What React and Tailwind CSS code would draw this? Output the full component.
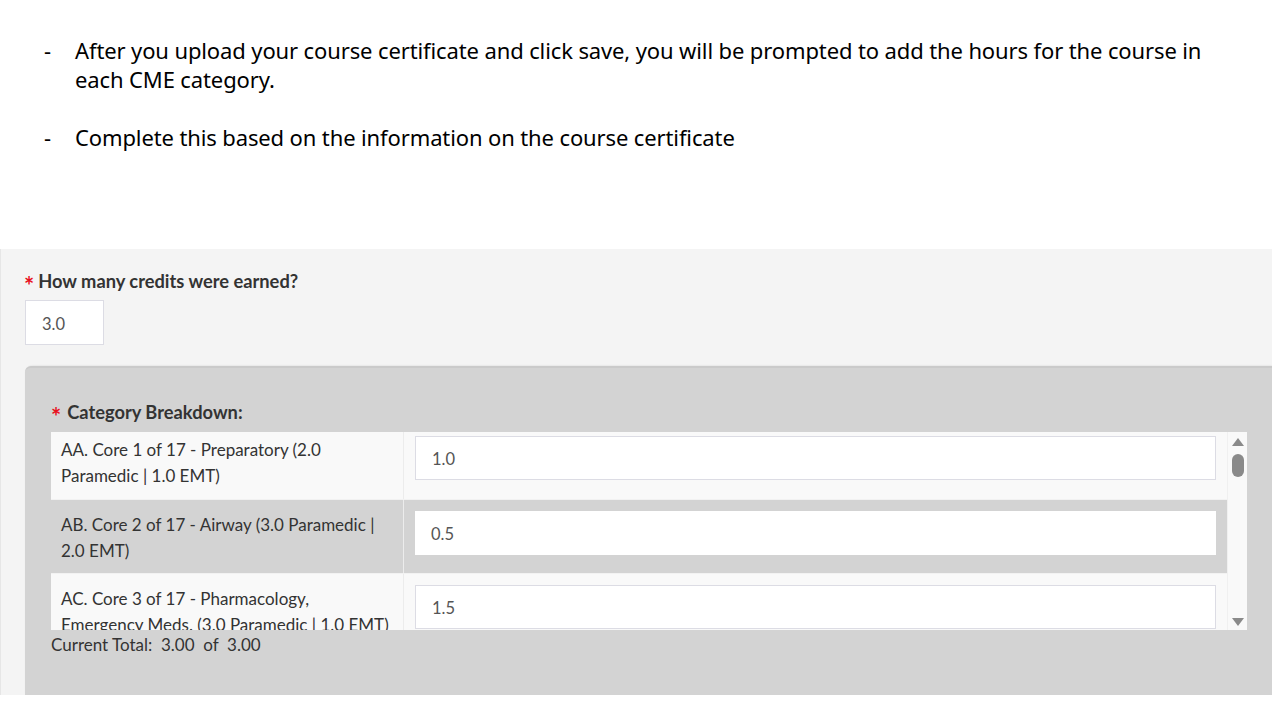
import React from "react";

const rows = [
  { label: "AA. Core 1 of 17 - Preparatory (2.0 Paramedic | 1.0 EMT)", value: "1.0", light: true },
  { label: "AB. Core 2 of 17 - Airway (3.0 Paramedic | 2.0 EMT)", value: "0.5", light: false },
  { label: "AC. Core 3 of 17 - Pharmacology, Emergency Meds. (3.0 Paramedic | 1.0 EMT)", value: "1.5", light: true },
];

export default function App() {
  return (
    <div className="w-[1272px] h-[715px] bg-white overflow-hidden flex flex-col">
      <div className="h-[249px] pt-[36px] text-[22px] leading-[29px] text-black" style={{ fontFamily: "'Noto Sans', sans-serif" }}>
        <div className="flex">
          <span className="w-[75px] pl-[44px]">-</span>
          <p className="w-[1160px] tracking-[-0.12px]">After you upload your course certificate and click save, you will be prompted to add the hours for the course in each CME category.</p>
        </div>
        <div className="flex mt-[29px]">
          <span className="w-[75px] pl-[44px]">-</span>
          <p className="tracking-[-0.12px]">Complete this based on the information on the course certificate</p>
        </div>
      </div>
      <div className="h-[446px] bg-[#f4f4f4] border-l border-[#e6e6e6] pt-[20px] flex flex-col" style={{ fontFamily: "'Lato', sans-serif" }}>
        <div className="pl-[23px] flex items-center h-[26px] text-[18.3px] font-bold text-[#333]">
          <span className="text-[#e8101e] text-[24px] font-bold mr-[4px] leading-none mt-[8px]">*</span>
          <span>How many credits were earned?</span>
        </div>
        <div className="ml-[24px] mt-[5px] w-[79px] h-[45px] bg-white border border-[#dcdce4] flex items-center pl-[16px] pt-[3px] text-[16.5px] text-[#555]">3.0</div>
        <div className="ml-[24px] mt-[21px] flex-1 bg-[#d3d3d3] rounded-tl-[6px] border-t-2 border-[#cacaca] shadow-[1px_0_2px_rgba(0,0,0,0.15)] pt-[32px] pl-[26px] flex flex-col">
          <div className="flex items-center h-[26px] text-[18.3px] font-bold text-[#333]">
            <span className="text-[#e8101e] text-[24px] font-bold mr-[6px] leading-none mt-[8px]">*</span>
            <span>Category Breakdown:</span>
          </div>
          <div className="mt-[6px] w-[1196px] h-[198px] flex overflow-hidden">
            <div className="w-[1176px] flex flex-col overflow-hidden">
              <div className="-mt-[7px] flex flex-col">
                {rows.map((r, i) => (
                  <div key={i} className={`flex shrink-0 h-[74px] ${r.light ? "bg-[#f9f9f9]" : "bg-[#d3d3d3]"} ${i === 0 ? "" : "border-t border-[#f2f2f2]"}`}>
                    <div className="w-[353px] border-r border-[#ececec] pl-[10px] pr-[10px] pt-[12px] text-[17px] leading-[26px] text-[#333]">
                      {r.label}
                    </div>
                    <div className="flex-1 pl-[11px] pr-[11px] pt-[11px]">
                      <div className={`h-[44px] bg-white ${r.light ? "border border-[#dcdce4]" : ""} flex items-center pl-[16px] pt-[3px] text-[16.5px] text-[#555]`}>{r.value}</div>
                    </div>
                  </div>
                ))}
              </div>
            </div>
            <div className="w-[20px] bg-[#f9f9f9] border-l border-[#f0f0f0] flex flex-col items-center pt-[6px]">
              <svg width="12" height="8" viewBox="0 0 12 8"><path d="M6 0 L12 8 L0 8 Z" fill="#8a8a8a" /></svg>
              <div className="mt-[8px] w-[12px] h-[23px] rounded-[6px] bg-[#8a8a8a]" />
              <div className="flex-1" />
              <svg className="mb-[4px]" width="12" height="8" viewBox="0 0 12 8"><path d="M0 0 L12 0 L6 8 Z" fill="#8a8a8a" /></svg>
            </div>
          </div>
          <div className="mt-[2px] text-[17px] text-[#333] leading-[26px] whitespace-pre">Current Total:  3.00  of  3.00</div>
        </div>
      </div>
      <div className="h-[20px] bg-white" />
    </div>
  );
}
